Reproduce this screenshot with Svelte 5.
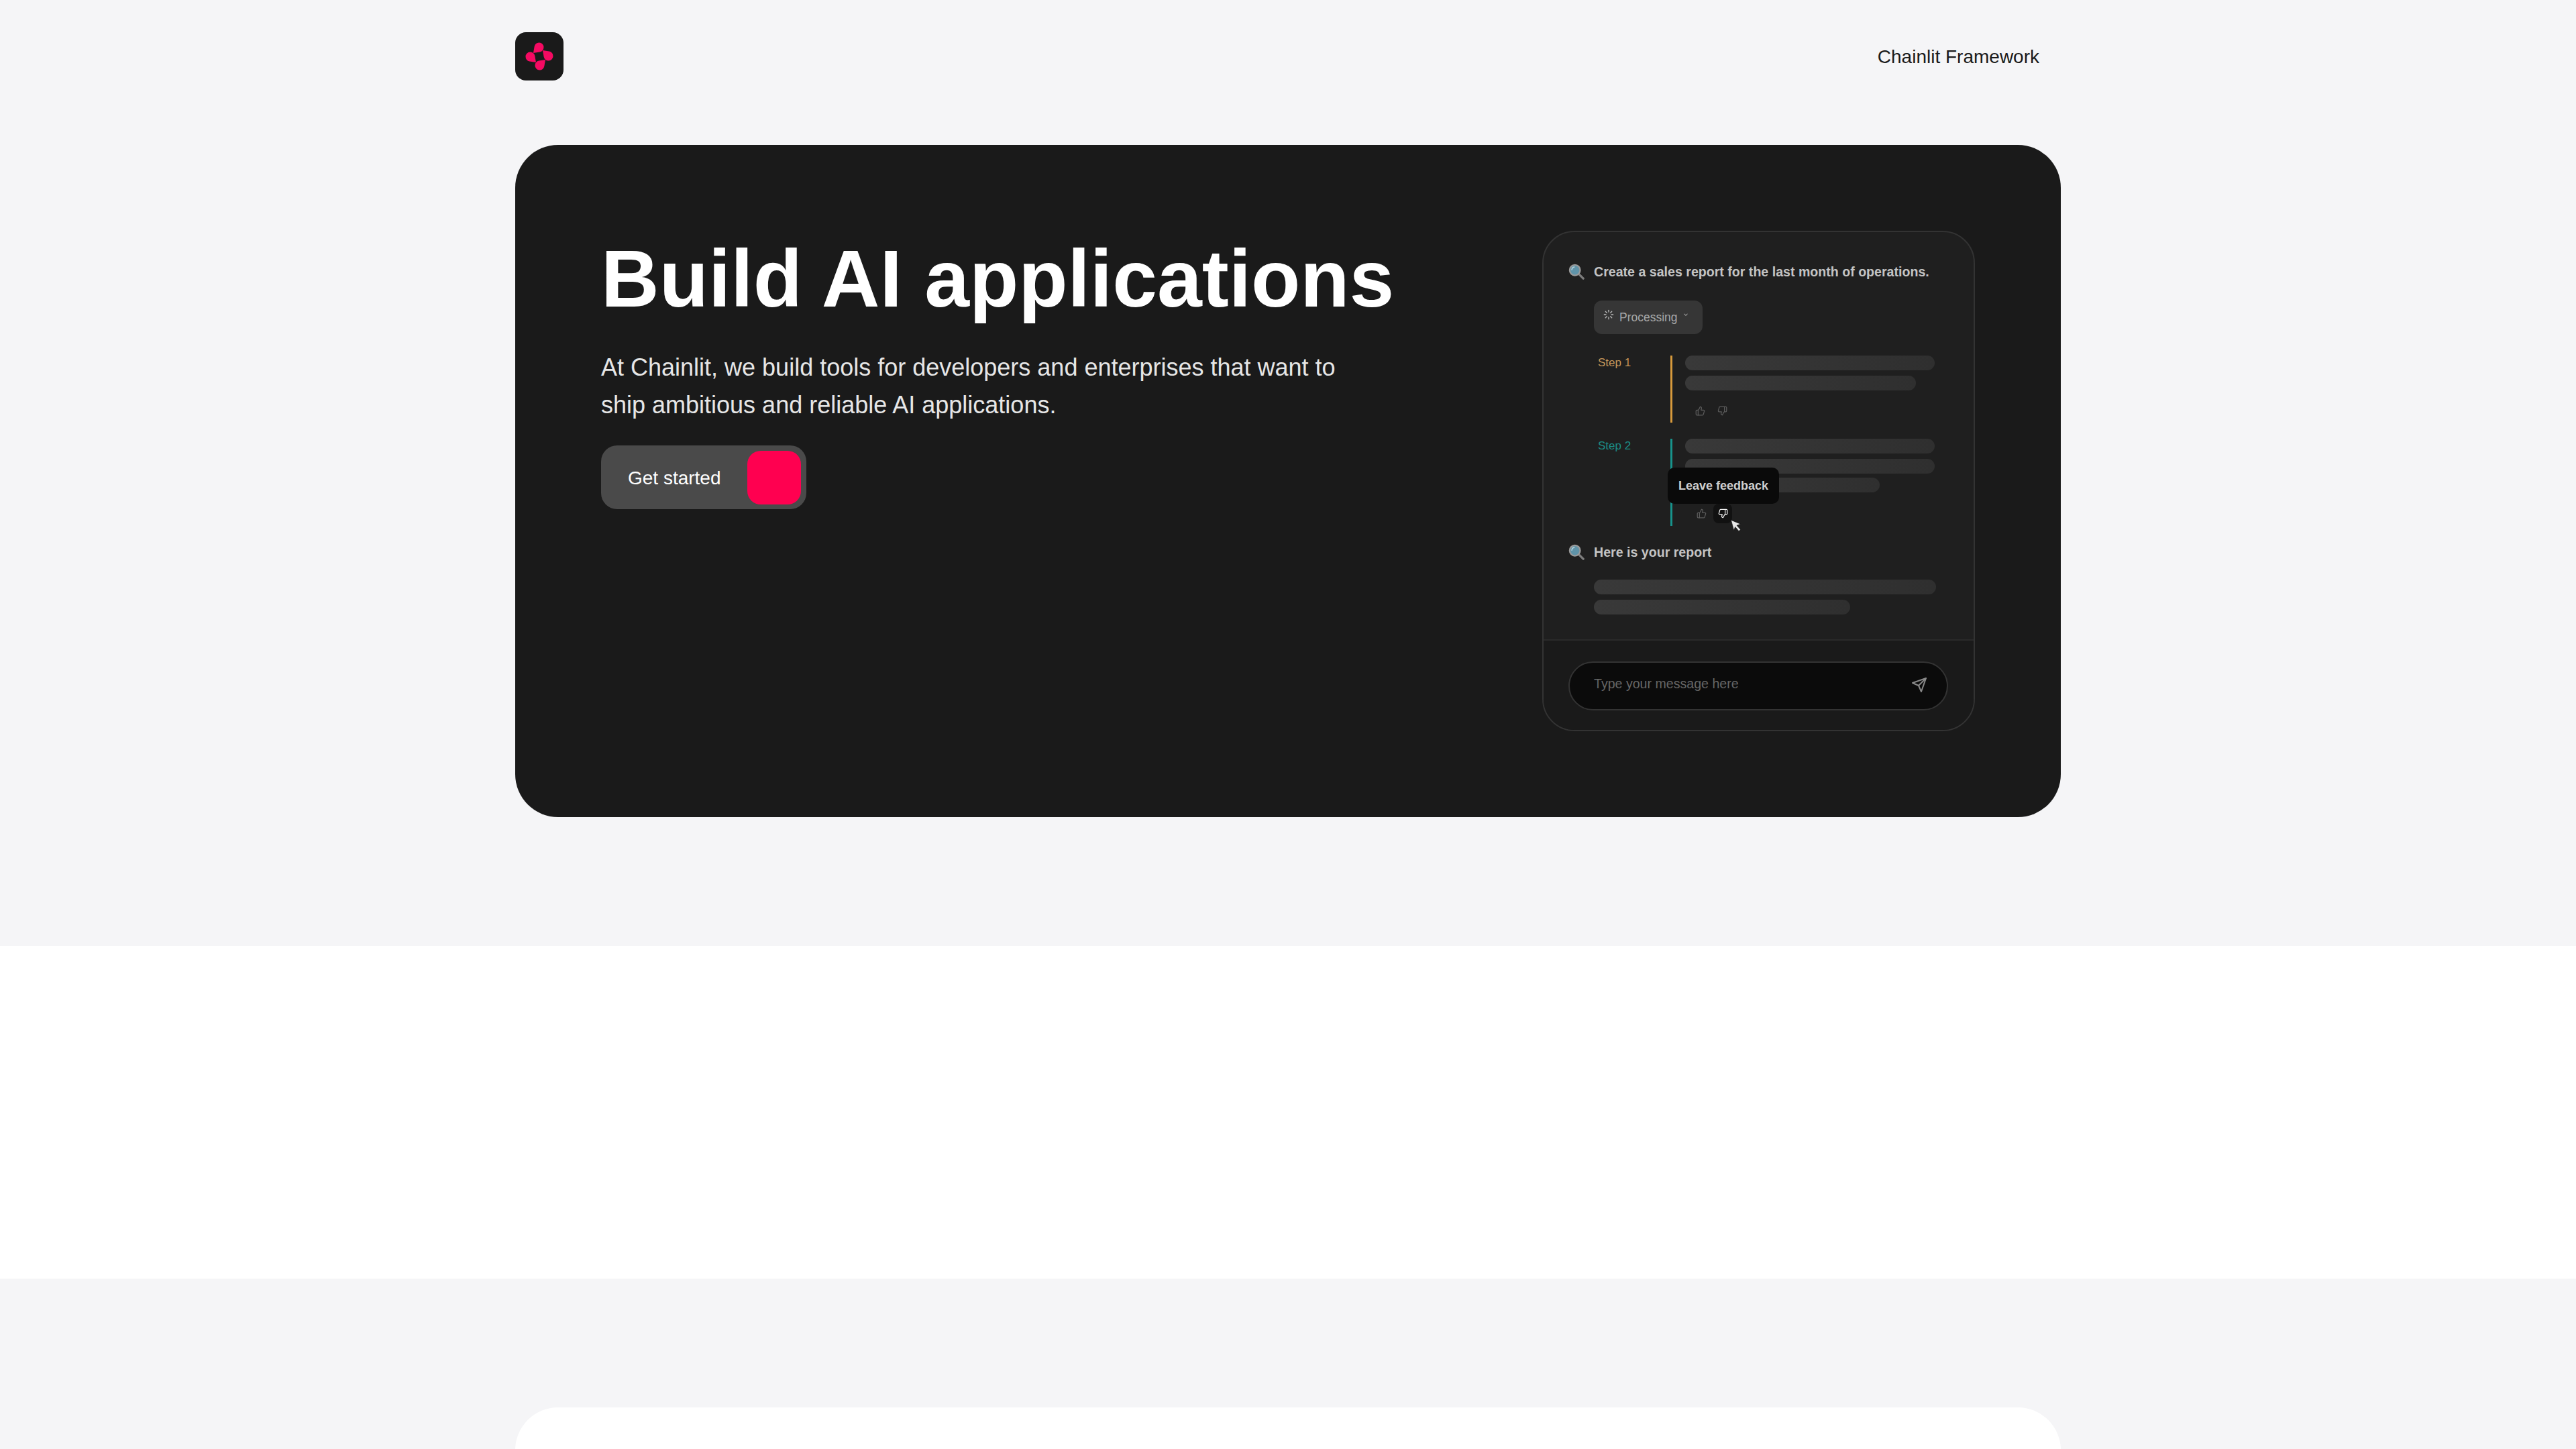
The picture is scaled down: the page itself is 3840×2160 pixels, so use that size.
<script>
  const petals = [0, 90, 180, 270];
  const thumbUp = "M15 5.88 14 10h5.83a2 2 0 0 1 1.92 2.56l-2.33 8A2 2 0 0 1 17.5 22H4a2 2 0 0 1-2-2v-8a2 2 0 0 1 2-2h2.76a2 2 0 0 0 1.79-1.11L12 2h0a3.13 3.13 0 0 1 3 3.88Z";
  const thumbDown = "M9 18.12 10 14H4.17a2 2 0 0 1-1.92-2.56l2.33-8A2 2 0 0 1 6.5 2H20a2 2 0 0 1 2 2v8a2 2 0 0 1-2 2h-2.76a2 2 0 0 0-1.79 1.11L12 22h0a3.13 3.13 0 0 1-3-3.88Z";
  const spokes = [
    [12, 2, 12, 6], [12, 18, 12, 22], [4.9, 4.9, 7.8, 7.8], [16.2, 16.2, 19.1, 19.1],
    [2, 12, 6, 12], [18, 12, 22, 12], [4.9, 19.1, 7.8, 16.2], [16.2, 7.8, 19.1, 4.9]
  ];
</script>

{#snippet lens()}
  <svg class="lens" viewBox="0 0 26 26" aria-hidden="true">
    <path d="M15 15l9 9" stroke="#7d7d7d" stroke-width="3.6" stroke-linecap="round" />
    <circle cx="10.5" cy="10.5" r="8.5" fill="#5f93a8" stroke="#9a9a9a" stroke-width="2.4" />
    <path d="M5.5 10a5 5 0 0 1 4-4.5" fill="none" stroke="#b7d4de" stroke-width="1.6" stroke-linecap="round" />
  </svg>
{/snippet}

{#snippet up(cls)}
  <svg class={cls} viewBox="0 0 24 24" aria-hidden="true">
    <path d="M7 10v12" /><path d={thumbUp} />
  </svg>
{/snippet}

{#snippet down(cls)}
  <svg class={cls} viewBox="0 0 24 24" aria-hidden="true">
    <path d="M17 14V2" /><path d={thumbDown} />
  </svg>
{/snippet}

<div class="page">
  <header>
    <svg class="logo" viewBox="0 0 72 72" aria-label="Chainlit">
      <rect width="72" height="72" rx="16" fill="#1a1a1a" />
      {#each petals as deg}
        <path d="M27 31 L28.6 21.4 A7 7 0 1 1 36.6 29.4 Z" fill="#f50a62" transform="rotate({deg} 36 36)" />
      {/each}
    </svg>
    <span class="framework">Chainlit Framework</span>
  </header>

  <section class="hero">
    <div class="copy">
      <h1>Build AI applications</h1>
      <p>At Chainlit, we build tools for developers and enterprises that want to<br />ship ambitious and reliable AI applications.</p>
      <div class="cta">
        <span>Get started</span>
        <i></i>
      </div>
    </div>

    <div class="mock">
      <div class="thread">
        <div class="who">
          {@render lens()}
          <b>Create a sales report for the last month of operations.</b>
        </div>

        <div class="chip">
          <svg class="spin" viewBox="0 0 24 24" aria-hidden="true">
            {#each spokes as s}
              <line x1={s[0]} y1={s[1]} x2={s[2]} y2={s[3]} />
            {/each}
          </svg>
          <span>Processing</span>
          <svg class="chev" viewBox="0 0 24 24" aria-hidden="true"><path d="m6 9 6 6 6-6" /></svg>
        </div>

        <div class="step one">
          <span class="label">Step 1</span>
          <div class="body">
            <div class="bar" style="width: 372px"></div>
            <div class="bar" style="width: 344px"></div>
            <div class="acts">
              {@render up("thumb")}
              {@render down("thumb")}
            </div>
          </div>
        </div>

        <div class="step two">
          <span class="label">Step 2</span>
          <div class="body">
            <div class="bar" style="width: 372px"></div>
            <div class="bar" style="width: 372px"></div>
            <div class="bar short" style="width: 290px"></div>
            <div class="acts hovered">
              {@render up("thumb")}
              <span class="hot">{@render down("thumb lit")}</span>
            </div>
            <div class="tip">Leave feedback</div>
            <svg class="cursor" viewBox="0 0 14 16" aria-hidden="true">
              <path d="M1 1L13 6L8.3 7.8L13 13L10.8 15L6.3 9.6L4.6 14Z" fill="#e8e8e8" stroke="#111" stroke-width=".6" />
            </svg>
          </div>
        </div>

        <div class="who answer">
          {@render lens()}
          <b>Here is your report</b>
        </div>
        <div class="report">
          <div class="bar" style="width: 510px"></div>
          <div class="bar" style="width: 382px"></div>
        </div>
      </div>

      <div class="composer">
        <div class="input">
          <span>Type your message here</span>
          <svg viewBox="0 0 24 24" aria-hidden="true">
            <path d="M22 2 11 13" /><path d="M22 2 15 22 11 13 2 9Z" />
          </svg>
        </div>
      </div>
    </div>
  </section>

  <section class="band"></section>
  <section class="next"></section>
</div>

<style>
  :global(body) {
    background: #f5f5f7;
  }

  .page {
    height: 2160px;
    overflow: hidden;
    font-family: "Liberation Sans", Arial, sans-serif;
    background: #f5f5f7;
  }

  header {
    width: 2304px;
    height: 216px;
    margin: 0 auto;
    display: flex;
    align-items: center;
    justify-content: space-between;
    padding: 48px 32px 96px 0;
    box-sizing: border-box;
  }

  .logo {
    width: 72px;
    height: 72px;
    display: block;
  }

  .framework {
    margin-top: 2px;
    font-size: 28px;
    color: #1a1a1a;
  }

  .hero {
    width: 2304px;
    margin: 0 auto;
    box-sizing: border-box;
    padding: 128px;
    background: #1a1a1a;
    border-radius: 64px;
    display: flex;
    justify-content: space-between;
  }

  h1 {
    margin: 0;
    font-size: 120px;
    line-height: 142px;
    font-weight: 700;
    color: #fff;
  }

  .copy p {
    margin: 34px 0 0;
    font-size: 36px;
    line-height: 56px;
    color: #e6e6e6;
  }

  .cta {
    margin-top: 32px;
    width: 306px;
    height: 95px;
    box-sizing: border-box;
    padding: 0 8px 0 40px;
    display: flex;
    align-items: center;
    justify-content: space-between;
    background: #4a4a4a;
    border-radius: 24px;
    color: #fff;
    font-size: 28px;
  }

  .cta span {
    margin-top: 2px;
  }

  .cta i {
    width: 80px;
    height: 80px;
    border-radius: 20px;
    background: #ff0050;
  }

  .mock {
    width: 645px;
    height: 746px;
    box-sizing: border-box;
    border: 2px solid #333;
    border-radius: 48px;
    overflow: hidden;
    background: #1f1f1f;
    display: flex;
    flex-direction: column;
    color: #c4c4c4;
  }

  .thread {
    height: 609px;
    box-sizing: border-box;
    padding: 44px 0 0 37px;
    border-bottom: 2px solid #2a2a2a;
  }

  .who {
    display: flex;
    align-items: center;
    height: 30px;
    font-size: 19.6px;
  }

  .lens {
    width: 24px;
    height: 26px;
    margin-right: 14px;
  }

  .chip {
    margin: 28px 0 0 38px;
    width: 162px;
    height: 50px;
    box-sizing: border-box;
    padding-left: 14px;
    display: flex;
    align-items: center;
    background: #363636;
    border-radius: 12px;
    font-size: 17.5px;
    color: #a8a8a8;
  }

  .spin {
    width: 16px;
    height: 16px;
    margin: -8px 8px 0 0;
    stroke: #bbb;
    stroke-width: 2;
    stroke-linecap: round;
  }

  .chev {
    width: 10px;
    height: 10px;
    margin: -8px 0 0 7px;
    fill: none;
    stroke: #aaa;
    stroke-width: 2.5;
  }

  .step {
    margin: 32px 0 0 44px;
    display: flex;
    font-size: 17px;
  }

  .step + .step {
    margin-top: 24px;
  }

  .label {
    width: 108px;
    line-height: 22px;
  }

  .body {
    position: relative;
    padding-left: 19px;
    border-left: 3px solid;
    display: flex;
    flex-direction: column;
    gap: 8px;
  }

  .one .label {
    color: #c4965a;
  }

  .one .body {
    height: 100px;
    border-color: #d79a3c;
  }

  .two .label {
    color: #1c8c86;
  }

  .two .body {
    height: 130px;
    border-color: #17938c;
  }

  .bar {
    height: 22px;
    border-radius: 11px;
    background: linear-gradient(90deg, #393939, #2f2f2f);
  }

  .bar.short {
    margin-top: -2px;
  }

  .acts {
    display: flex;
    align-items: center;
    gap: 18px;
    margin: 15px 0 0 15px;
  }

  .acts.hovered {
    margin: 9px 0 0 17px;
    gap: 10px;
  }

  .thumb {
    width: 15px;
    height: 15px;
    fill: none;
    stroke: #5c5c5c;
    stroke-width: 2;
    stroke-linecap: round;
    stroke-linejoin: round;
  }

  .lit {
    stroke: #f2f2f2;
  }

  .hot {
    width: 28px;
    height: 29px;
    display: flex;
    align-items: center;
    justify-content: center;
    background: #111;
    border-radius: 8px;
  }

  .tip {
    position: absolute;
    left: -7px;
    top: 43px;
    width: 166px;
    height: 54px;
    display: flex;
    align-items: center;
    justify-content: center;
    background: #0a0a0a;
    border-radius: 10px;
    font-size: 18px;
    font-weight: 700;
    color: #cfcfcf;
  }

  .cursor {
    position: absolute;
    left: 86px;
    top: 120px;
    width: 17px;
    height: 19px;
  }

  .answer {
    margin-top: 24px;
  }

  .report {
    margin: 26px 0 0 38px;
    display: flex;
    flex-direction: column;
    gap: 8px;
  }

  .composer {
    flex: 1;
    box-sizing: border-box;
    padding: 31px 38px 0 37px;
    background: #1a1a1a;
  }

  .input {
    height: 73px;
    box-sizing: border-box;
    border: 2px solid #333;
    border-radius: 37px;
    background: #0b0b0b;
    display: flex;
    align-items: center;
    justify-content: space-between;
    padding: 0 29px 0 36px;
    font-size: 19.6px;
    color: #666;
  }

  .input span {
    margin-top: -6px;
  }

  .input svg {
    width: 24px;
    height: 24px;
    margin-top: -4px;
    fill: none;
    stroke: #8a8a8a;
    stroke-width: 2;
    stroke-linejoin: round;
    stroke-linecap: round;
  }

  .band {
    margin-top: 192px;
    height: 496px;
    background: #fff;
  }

  .next {
    width: 2304px;
    height: 600px;
    margin: 192px auto 0;
    background: #fff;
    border-radius: 64px;
  }
</style>
